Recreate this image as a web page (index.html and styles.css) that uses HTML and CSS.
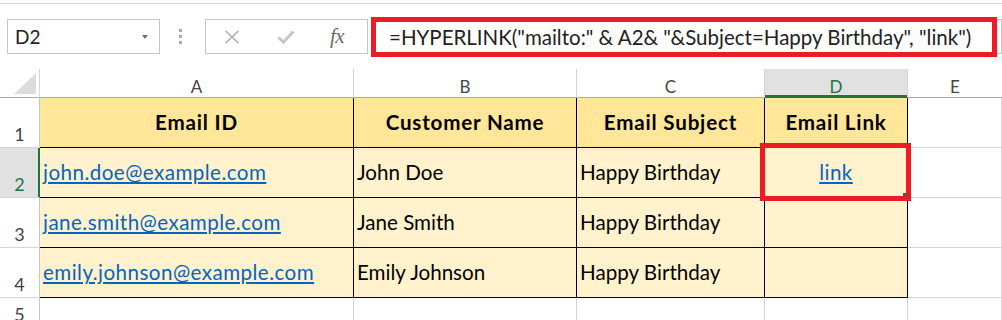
FILE: index.html
```html
<!DOCTYPE html>
<html lang="en">
<head>
<meta charset="utf-8">
<title>HYPERLINK mailto</title>
<link rel="stylesheet" href="styles.css">
</head>
<body>
<div class="top"></div>
<div class="fbar">
  <div class="namebox"><span class="nb-text">D2</span><span class="nb-arrow"></span></div>
  <div class="grip"><i></i><i></i><i></i></div>
  <div class="btns">
    <svg class="ic-x" width="16" height="14" viewBox="0 0 16 14"><path d="M1.5 0.8 L14.5 13.2 M14.5 0.8 L1.5 13.2" stroke="#b3b3b3" stroke-width="1.6" fill="none"/></svg>
    <svg class="ic-ok" width="18" height="14" viewBox="0 0 18 14"><path d="M1.5 7.5 L6.5 12 L16.5 1.5" stroke="#c4c4c4" stroke-width="3" fill="none"/></svg>
    <span class="fx">fx</span>
  </div>
  <div class="formula">
    <span class="ftext">=HYPERLINK("mailto:" &amp; A2&amp; "&amp;Subject=Happy Birthday", "link")</span>
    <div class="hl hl-formula"></div>
  </div>
</div>
<div class="sheet">
  <div class="corner"><svg width="22" height="21" viewBox="0 0 22 21"><polygon points="22,0 22,21 0,21" fill="#dcdcdc"/></svg></div>
  <div class="ch">A</div>
  <div class="ch">B</div>
  <div class="ch">C</div>
  <div class="ch ch-sel">D</div>
  <div class="ch ch-last">E</div>

  <div class="rh">1</div>
  <div class="cell hd">Email ID</div>
  <div class="cell hd">Customer Name</div>
  <div class="cell hd">Email Subject</div>
  <div class="cell hd">Email Link</div>
  <div class="gc"></div>

  <div class="rh rh-sel">2</div>
  <div class="cell"><a class="lnk" href="#">john.doe@example.com</a></div>
  <div class="cell">John Doe</div>
  <div class="cell">Happy Birthday</div>
  <div class="cell center sel"><a class="lnk" href="#">link</a><span class="handle"></span><div class="hl hl-cell"></div></div>
  <div class="gc"></div>

  <div class="rh">3</div>
  <div class="cell"><a class="lnk" href="#">jane.smith@example.com</a></div>
  <div class="cell">Jane Smith</div>
  <div class="cell">Happy Birthday</div>
  <div class="cell"></div>
  <div class="gc"></div>

  <div class="rh">4</div>
  <div class="cell"><a class="lnk" href="#">emily.johnson@example.com</a></div>
  <div class="cell">Emily Johnson</div>
  <div class="cell">Happy Birthday</div>
  <div class="cell"></div>
  <div class="gc"></div>

  <div class="rh">5</div>
  <div class="gc"></div>
  <div class="gc"></div>
  <div class="gc"></div>
  <div class="gc"></div>
  <div class="gc"></div>
</div>
</body>
</html>
```
FILE: styles.css
```css
* { box-sizing: border-box; margin: 0; padding: 0; }
html, body { background: #fff; }
body {
  width: 1002px;
  height: 320px;
  overflow: hidden;
  font-family: Lato, "Liberation Sans", sans-serif;
  color: #000;
}

.top { height: 4px; border-bottom: 1px solid #d6d6d6; }

.fbar {
  display: flex;
  height: 35px;
  margin: 15px 0 15px 7px;
}

.namebox {
  width: 153px;
  border: 1px solid #c6c6c6;
  display: flex;
  align-items: center;
  padding-left: 7px;
  font-size: 19px;
  color: #222;
}
.nb-arrow {
  margin-left: auto;
  margin-right: 11px;
  width: 0; height: 0;
  border-left: 3.5px solid transparent;
  border-right: 3.5px solid transparent;
  border-top: 4px solid #707070;
}

.grip {
  width: 45px;
  display: flex;
  flex-direction: column;
  justify-content: center;
  align-items: flex-start;
  gap: 3px;
  padding-left: 19px;
}
.grip i { display: block; width: 3px; height: 3px; background: #ababab; }

.btns {
  width: 163px;
  border: 1px solid #c6c6c6;
  display: flex;
  align-items: center;
}
.ic-x { margin-left: 18px; }
.ic-ok { margin-left: 37px; }
.fx {
  margin-left: 35px;
  font-family: "Liberation Serif", "DejaVu Serif", serif;
  font-style: italic;
  font-size: 21px;
  color: #6a6a6a;
  letter-spacing: -0.5px;
}

.formula {
  flex: 1;
  margin-left: 3px;
  border: 1px solid #c6c6c6;
  position: relative;
  display: flex;
  align-items: center;
  padding-left: 17px;
  font-size: 20.5px;
  color: #222;
  white-space: nowrap;
}

.hl {
  position: absolute;
  border: 5px solid #ec1c24;
  pointer-events: none;
}
.hl-formula { left: -1px; top: -3px; width: 626px; height: 40px; }
.hl-cell { left: -5px; top: -5px; right: -4px; bottom: -4px; }

.sheet {
  display: grid;
  grid-template-columns: 40px 314px 223px 188px 143px 1fr;
  grid-template-rows: 29px 50px 50px 50px 50px 30px;
}

.corner {
  border-right: 1px solid #d4d4d4;
  border-bottom: 1px solid #ababab;
  display: flex;
  align-items: flex-end;
  justify-content: flex-end;
  padding: 0 3px 3px 0;
}

.ch {
  border-right: 1px solid #d4d4d4;
  border-bottom: 1px solid #ababab;
  display: flex;
  align-items: flex-end;
  justify-content: center;
  padding-bottom: 2px;
  font-size: 17px;
  line-height: 1;
  color: #444;
}
.ch-sel {
  background: #e1e1e1;
  color: #217346;
  border-bottom-color: #217346;
  box-shadow: inset 0 -2px 0 #217346;
}
.ch-last { border-right: none; }

.rh {
  border-right: 1px solid #c6c6c6;
  border-bottom: 1px solid #d4d4d4;
  display: flex;
  align-items: flex-end;
  justify-content: center;
  padding-bottom: 4px;
  font-size: 18px;
  line-height: 1;
  color: #444;
}
.rh-sel {
  background: #e1e1e1;
  color: #217346;
  border-right-color: #217346;
  box-shadow: inset -1px 0 0 #217346;
}

.cell {
  background: #fff2cc;
  border-right: 1px solid #000;
  border-bottom: 1px solid #000;
  display: flex;
  align-items: center;
  padding-left: 3px;
  font-size: 20.6px;
  line-height: 1;
  white-space: nowrap;
}
.cell.hd {
  background: #ffe699;
  font-weight: 700;
  letter-spacing: 0.8px;
  justify-content: center;
  padding-left: 0;
}
.cell.center { justify-content: center; padding-left: 0; }
.cell.sel { position: relative; }

.lnk {
  color: #0563c1;
  text-decoration: underline;
  text-underline-offset: 2px;
  letter-spacing: 0.45px;
}

.handle {
  position: absolute;
  right: 1px;
  bottom: 1px;
  width: 3px;
  height: 3px;
  background: #217346;
}

.gc {
  border-right: 1px solid #d4d4d4;
  border-bottom: 1px solid #d4d4d4;
}
```
